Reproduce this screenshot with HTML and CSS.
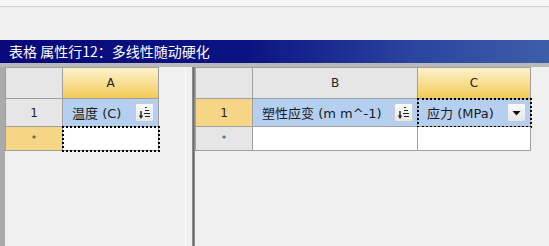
FILE: index.html
```html
<!DOCTYPE html>
<html lang="zh">
<head>
<meta charset="utf-8">
<link rel="stylesheet" href="styles.css">
</head>
<body>
<div class="app">
  <div class="toolbar"><div class="toolbar-strip"></div></div>
  <div class="titlebar">表格 属性行12：多线性随动硬化</div>
  <div class="content">
    <div class="left-panel">
      <div class="grid grid-left">
        <div class="hdr corner"></div>
        <div class="hdr hdr-sel">A</div>
        <div class="rowlbl">1</div>
        <div class="cell cell-blue">
          <span class="cell-text">温度 (C)</span>
          <span class="btn">
            <svg width="13" height="15" viewBox="0 0 13 15"><path d="M7 2.5h2M7 5.5h4M6 8.5h6M7 11.5h5" stroke="#222" stroke-width="1.2" fill="none"/><path d="M3 6v5" stroke="#222" stroke-width="1.4"/><path d="M0.8 10.5h4.4L3 14z" fill="#222"/></svg>
          </span>
        </div>
        <div class="rowlbl rowlbl-sel star">*</div>
        <div class="cell cell-white focus"></div>
      </div>
    </div>
    <div class="split-gap"></div>
    <div class="splitter"></div>
    <div class="right-panel">
      <div class="grid grid-right">
        <div class="hdr corner"></div>
        <div class="hdr">B</div>
        <div class="hdr hdr-sel">C</div>
        <div class="rowlbl rowlbl-sel">1</div>
        <div class="cell cell-blue">
          <span class="cell-text">塑性应变 (m m^-1)</span>
          <span class="btn">
            <svg width="13" height="15" viewBox="0 0 13 15"><path d="M7 2.5h2M7 5.5h4M6 8.5h6M7 11.5h5" stroke="#222" stroke-width="1.2" fill="none"/><path d="M3 6v5" stroke="#222" stroke-width="1.4"/><path d="M0.8 10.5h4.4L3 14z" fill="#222"/></svg>
          </span>
        </div>
        <div class="cell cell-blue focus">
          <span class="cell-text">应力 (MPa)</span>
          <span class="btn">
            <svg width="9" height="6" viewBox="0 0 9 6"><path d="M0.5 1h8L4.5 5.5z" fill="#111"/></svg>
          </span>
        </div>
        <div class="rowlbl star">*</div>
        <div class="cell cell-white"></div>
        <div class="cell cell-white"></div>
      </div>
    </div>
  </div>
</div>
</body>
</html>
```

FILE: styles.css
```css
html, body {
  margin: 0;
  padding: 0;
  background: #f0f0f0;
}
.app {
  width: 549px;
  height: 246px;
  overflow: hidden;
  display: flex;
  flex-direction: column;
  font-family: "DejaVu Sans", "Noto Sans CJK SC", sans-serif;
}
.toolbar {
  height: 40px;
  background: #f0f0f0;
}
.toolbar-strip {
  height: 6px;
  background: #f6f6f6;
  border-bottom: 1px solid #d2d2d2;
}
.titlebar {
  height: 23px;
  line-height: 23px;
  padding-left: 9px;
  color: #fff;
  font-family: "Noto Sans CJK SC", sans-serif;
  font-size: 14px;
  background: linear-gradient(90deg, #08087a 0%, #0b1382 45%, #2a44a0 75%, #3e5ea8 100%);
  white-space: nowrap;
}
.content {
  flex: 1;
  display: flex;
  border-top: 4px solid #b9b9b9;
}
.left-panel {
  width: 186px;
  box-sizing: border-box;
  border-left: 5px solid #aaaaaa;
  border-right: 1px solid #fbfbfb;
  background: #f0f0f0;
}
.split-gap {
  width: 6px;
}
.splitter {
  width: 3px;
  background: linear-gradient(90deg, #9a9a9a, #6e6e6e, #9a9a9a);
}
.right-panel {
  flex: 1;
}
.grid {
  display: grid;
  grid-template-rows: 31px 28px 24px;
  border-left: 1px solid #a0a0a0;
  border-top: 1px solid #a0a0a0;
  width: max-content;
}
.grid-left {
  grid-template-columns: 57px 96px;
}
.grid-right {
  grid-template-columns: 57px 165px 113px;
}
.grid > div {
  box-sizing: border-box;
  border-right: 1px solid #a0a0a0;
  border-bottom: 1px solid #a0a0a0;
}
.hdr {
  display: flex;
  align-items: center;
  justify-content: center;
  font-size: 12px;
  color: #222;
  background: #e6e6e6;
}
.hdr-sel {
  background: linear-gradient(180deg, #fcf1cc 0%, #f8dd8e 55%, #f4c954 100%);
}
.rowlbl {
  display: flex;
  align-items: center;
  justify-content: center;
  font-size: 12px;
  color: #222;
  background: #e6e6e6;
}
.rowlbl-sel {
  background: #f6d685;
}
.star {
  font-size: 9px;
  color: #333;
}
.cell {
  display: flex;
  align-items: center;
  padding-left: 9px;
  padding-right: 4px;
  font-size: 13px;
  color: #1a1a1a;
}
.cell-blue {
  background: #b5cff1;
}
.cell-white {
  background: #fff;
}
.cell-text {
  flex: 1;
  white-space: nowrap;
}
.btn {
  width: 19px;
  height: 19px;
  box-sizing: border-box;
  display: flex;
  align-items: center;
  justify-content: center;
  border: 1px solid #c9cdd2;
  border-radius: 2px;
  background: linear-gradient(180deg, #fbfbfb 0%, #e6e6e6 100%);
}
.focus {
  outline: 2px dotted #000;
  outline-offset: -1px;
}
```
